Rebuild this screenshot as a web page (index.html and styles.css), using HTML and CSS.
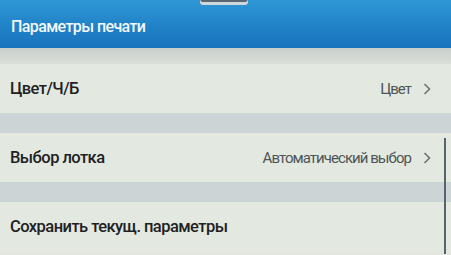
FILE: index.html
```html
<!DOCTYPE html>
<html lang="ru">
<head>
  <meta charset="UTF-8">
  <title>Параметры печати</title>
  <link rel="stylesheet" href="styles.css">
</head>
<body>
  <div class="screen">
    <div class="header">
      <div class="handle"></div>
      <h1>Параметры печати</h1>
    </div>
    <div class="gap"></div>
    <div class="list">
      <div class="row">
        <span class="label">Цвет/Ч/Б</span>
        <span class="value">Цвет</span>
        <svg class="chev" width="8" height="12" viewBox="0 0 8 12"><polyline points="1.5,1 6.5,6 1.5,11" fill="none" stroke="#6c7374" stroke-width="1.6"/></svg>
      </div>
      <div class="sep"></div>
      <div class="row">
        <span class="label">Выбор лотка</span>
        <span class="value">Автоматический выбор</span>
        <svg class="chev" width="8" height="12" viewBox="0 0 8 12"><polyline points="1.5,1 6.5,6 1.5,11" fill="none" stroke="#6c7374" stroke-width="1.6"/></svg>
      </div>
      <div class="sep"></div>
      <div class="row">
        <span class="label">Сохранить текущ. параметры</span>
      </div>
      <div class="scrollbar"></div>
    </div>
  </div>
</body>
</html>
```

FILE: styles.css
```css
body {
  margin: 0;
  font-family: "Roboto", "DejaVu Sans Condensed", sans-serif;
  background: #e3e7df;
}
.screen {
  width: 451px;
  height: 255px;
  overflow: hidden;
}
.header {
  position: relative;
  height: 48px;
  background: linear-gradient(#2f97d6, #1f80c6 60%, #1a74bd);
  display: flex;
  align-items: center;
  padding-left: 11px;
}
.header h1 {
  margin: 4px 0 0;
  font-size: 16px;
  font-weight: 500;
  letter-spacing: -0.6px;
  color: #f4f8fb;
}
.handle {
  position: absolute;
  left: 200px;
  top: -3px;
  width: 48px;
  height: 8px;
  border-radius: 3px;
  background: #5a6670;
  box-shadow: inset 0 2px 0 #e8ecef, inset 0 -3px 0 #cfd6dc;
}
.gap {
  height: 16px;
  background: linear-gradient(#c9d0cd, #d9ded8);
}
.list {
  position: relative;
}
.row {
  height: 49px;
  display: flex;
  align-items: center;
  padding: 0 20px 0 10px;
  background: #e3e8e0;
}
.label {
  flex: 1;
  font-size: 16.5px;
  font-weight: 500;
  letter-spacing: -0.55px;
  color: #1e2123;
}
.value {
  font-size: 15px;
  letter-spacing: -0.95px;
  color: #4f5556;
}
.chev {
  margin-left: 12px;
}
.sep {
  height: 20px;
  background: #cdd4d6;
}
.scrollbar {
  position: absolute;
  right: 5px;
  top: 74px;
  width: 2px;
  height: 116px;
  background: #56626e;
}
```
